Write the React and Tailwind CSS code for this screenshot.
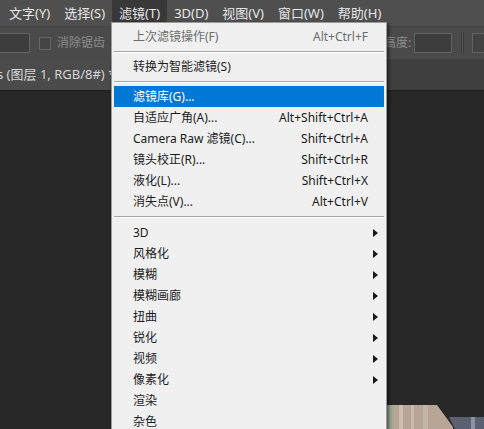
import React from "react";

const Arrow = () => (
  <svg width="5" height="8" viewBox="0 0 5 8" className="block">
    <polygon points="0,0 5,4 0,8" fill="#1a1a1a" />
  </svg>
);

function Row({ label, shortcut, arrow, active, disabled }) {
  return (
    <div
      className={
        "flex h-[21px] items-center pl-[19px] pr-[16px] text-[12px] " +
        (active ? "bg-[#0078d7] text-white" : disabled ? "text-[#6d6d6d]" : "text-[#1b1b1b]")
      }
    >
      <span className="flex-1 whitespace-nowrap">{label}</span>
      {shortcut && <span className="whitespace-nowrap">{shortcut}</span>}
      {arrow && (
        <span className="mr-[-10px]">
          <Arrow />
        </span>
      )}
    </div>
  );
}

function Sep({ h }) {
  return (
    <div className={"flex flex-col justify-center " + h}>
      <div className="h-px bg-[#a6a6a6]" />
      <div className="h-px bg-white" />
    </div>
  );
}

export default function App() {
  const menus = ["文字(Y)", "选择(S)", "滤镜(T)", "3D(D)", "视图(V)", "窗口(W)", "帮助(H)"];
  return (
    <div className="relative flex h-[429px] w-[484px] flex-col overflow-hidden bg-[#282828] font-['Noto_Sans','Noto_Sans_CJK_SC',sans-serif]">
      {/* menu bar */}
      <div className="flex h-[26px] shrink-0 items-stretch bg-[#4f4f4f] pl-[2px] text-[13px] text-[#e6e6e6]">
        {menus.map((m, i) => (
          <div
            key={m}
            className={
              "flex shrink-0 items-center whitespace-nowrap px-[7px] pt-[2px] " +
              (i === 2 ? "bg-[#383838]" : "")
            }
          >
            {m}
          </div>
        ))}
      </div>
      {/* options bar */}
      <div className="flex h-[33px] shrink-0 items-center overflow-hidden border-t border-[#444444] bg-[#4a4a4a] text-[12px]">
        <div className="h-[20px] w-[30px] shrink-0 border border-l-0 border-[#636363] bg-[#3d3d3d]" />
        <div className="ml-[9px] h-[13px] w-[12px] shrink-0 border border-[#666666] bg-[#454545]" />
        <span className="ml-[6px] shrink-0 whitespace-nowrap text-[#8d8d8d]">消除锯齿</span>
        <span className="ml-[279px] shrink-0 whitespace-nowrap text-[#8d8d8d]">高度:</span>
        <div className="ml-[3px] h-[20px] w-[38px] shrink-0 border border-[#636363] bg-[#3d3d3d]" />
        <div className="ml-[9px] h-[22px] w-[3px] shrink-0 border-x border-[#3a3a3a] bg-[#555555]" />
        <div className="ml-[8px] flex h-[20px] shrink-0 items-center whitespace-nowrap border border-[#636363] bg-[#424242] px-[12px] text-[#c8c8c8]">
          选择并遮住...
        </div>
      </div>
      {/* tab bar */}
      <div className="flex h-[32px] shrink-0 items-stretch border-b border-[#1e1e1e] bg-[#3f3f3f]">
        <div className="flex w-[110px] shrink-0 items-center whitespace-nowrap bg-[#4b4b4b] text-[13px] text-[#d6d6d6]">
          <span className="ml-[-3px]">s (图层 1, RGB/8#) *</span>
        </div>
      </div>
      <div className="flex-1 bg-[#282828]" />

      {/* canvas image fragment */}
      <svg className="absolute left-[387px] top-[403px]" width="97" height="26" viewBox="0 0 97 26">
        <polygon points="0,2 50,2 66,24 66,26 0,26" fill="#b7a696" />
        <rect x="0" y="2" width="6" height="24" fill="#9ea892" />
        <rect x="12" y="2" width="4" height="24" fill="#cbbfb0" />
        <rect x="24" y="2" width="3" height="24" fill="#c9bcad" />
        <rect x="36" y="2" width="5" height="24" fill="#c4b6a6" />
        <polygon points="62,14 97,14 97,26 68,26" fill="#5b6170" />
        <rect x="84" y="14" width="4" height="12" fill="#8d93a0" />
      </svg>

      {/* dropdown menu */}
      <div className="absolute left-[111px] top-[22px] w-[276px] border border-[#9a9a9a] bg-[#f0f0f0] px-[2px] pt-[3px] shadow-[2px_2px_3px_rgba(0,0,0,0.5)]">
        <Row label="上次滤镜操作(F)" shortcut="Alt+Ctrl+F" disabled />
        <Sep h="h-[9px]" />
        <Row label="转换为智能滤镜(S)" />
        <Sep h="h-[9px]" />
        <Row label="滤镜库(G)..." active />
        <Row label="自适应广角(A)..." shortcut="Alt+Shift+Ctrl+A" />
        <Row label="Camera Raw 滤镜(C)..." shortcut="Shift+Ctrl+A" />
        <Row label="镜头校正(R)..." shortcut="Shift+Ctrl+R" />
        <Row label="液化(L)..." shortcut="Shift+Ctrl+X" />
        <Row label="消失点(V)..." shortcut="Alt+Ctrl+V" />
        <Sep h="h-[10px]" />
        <Row label="3D" arrow />
        <Row label="风格化" arrow />
        <Row label="模糊" arrow />
        <Row label="模糊画廊" arrow />
        <Row label="扭曲" arrow />
        <Row label="锐化" arrow />
        <Row label="视频" arrow />
        <Row label="像素化" arrow />
        <Row label="渲染" />
        <Row label="杂色" />
      </div>
    </div>
  );
}
